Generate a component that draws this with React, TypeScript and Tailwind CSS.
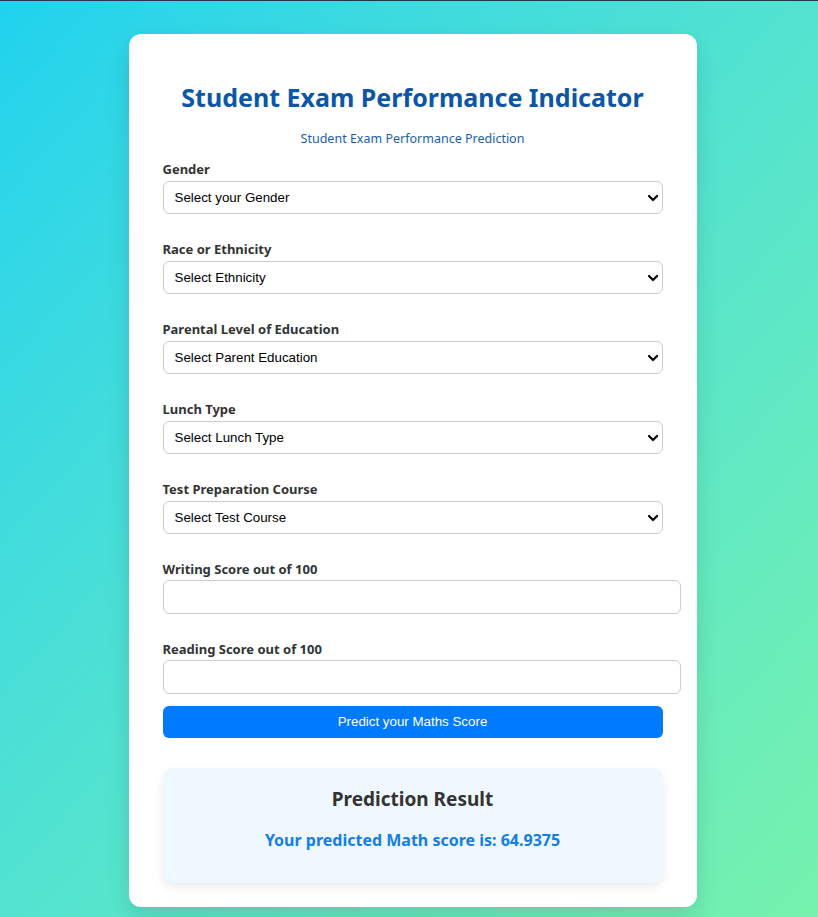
import { ChevronDown } from 'lucide-react'

const selects = [
  { label: 'Gender', placeholder: 'Select your Gender' },
  { label: 'Race or Ethnicity', placeholder: 'Select Ethnicity' },
  { label: 'Parental Level of Education', placeholder: 'Select Parent Education' },
  { label: 'Lunch Type', placeholder: 'Select Lunch Type' },
  { label: 'Test Preparation Course', placeholder: 'Select Test Course' },
]

const scores = ['Writing Score out of 100', 'Reading Score out of 100']

function SelectField({ label, placeholder }: { label: string; placeholder: string }) {
  return (
    <div className="flex flex-col">
      <label className="mb-1 text-[13px] leading-4 font-bold text-[#333]">{label}</label>
      <div className="relative">
        <select
          defaultValue=""
          className="h-[33px] w-full appearance-none rounded-[6px] border border-[#cccccc] bg-white pl-[11px] font-['Liberation_Sans',Arial,sans-serif] text-[13.33px] text-black outline-none"
        >
          <option value="" disabled>
            {placeholder}
          </option>
        </select>
        <ChevronDown
          aria-hidden="true"
          strokeWidth={3.2}
          className="pointer-events-none absolute top-[9px] right-[2px] size-[16px] text-black"
        />
      </div>
    </div>
  )
}

export default function App() {
  return (
    <div className="min-h-[917px] border-t border-[#1b3d47] bg-gradient-to-br from-[#1fd2ee] to-[#76f2ad] pt-[33px] pb-[9px] pl-[7px] font-['Noto_Sans','Open_Sans',sans-serif]">
      <div className="mx-auto w-[568px] rounded-[12px] bg-white px-[34px] pt-[46px] pb-[24px] shadow-[0_10px_25px_rgba(0,0,0,0.12)]">
        <h1 className="text-center text-[25px] leading-[34px] font-bold text-[#0b56a6]">
          Student Exam Performance Indicator
        </h1>
        <p className="mt-[17px] text-center text-[12.5px] leading-4 text-[#1c5ea6]">
          Student Exam Performance Prediction
        </p>

        <form className="mt-[14px] flex flex-col gap-[27px]" onSubmit={(e) => e.preventDefault()}>
          {selects.map((s) => (
            <SelectField key={s.label} label={s.label} placeholder={s.placeholder} />
          ))}
          {scores.map((label) => (
            <div key={label} className="flex flex-col">
              <label className="mb-[3px] text-[13px] leading-4 font-bold text-[#333]">{label}</label>
              <input
                type="number"
                className="box-content h-[32px] w-full rounded-[6px] border border-[#cccccc] bg-white px-[8px] outline-none"
              />
            </div>
          ))}
        </form>

        <button className="mt-[12px] h-[32px] w-full rounded-[6px] bg-[#007bff] font-['Liberation_Sans',Arial,sans-serif] text-[13.33px] text-white">
          Predict your Maths Score
        </button>

        <div className="mt-[30px] rounded-[10px] bg-[#eff7ff] px-5 pt-[19px] pb-[33px] text-center shadow-[0_4px_10px_rgba(0,0,0,0.08)]">
          <h2 className="text-[19px] leading-6 font-bold text-[#333]">Prediction Result</h2>
          <p className="mt-[19px] text-[16px] leading-5 font-bold text-[#137ee4]">
            Your predicted Math score is: 64.9375
          </p>
        </div>
      </div>
    </div>
  )
}
